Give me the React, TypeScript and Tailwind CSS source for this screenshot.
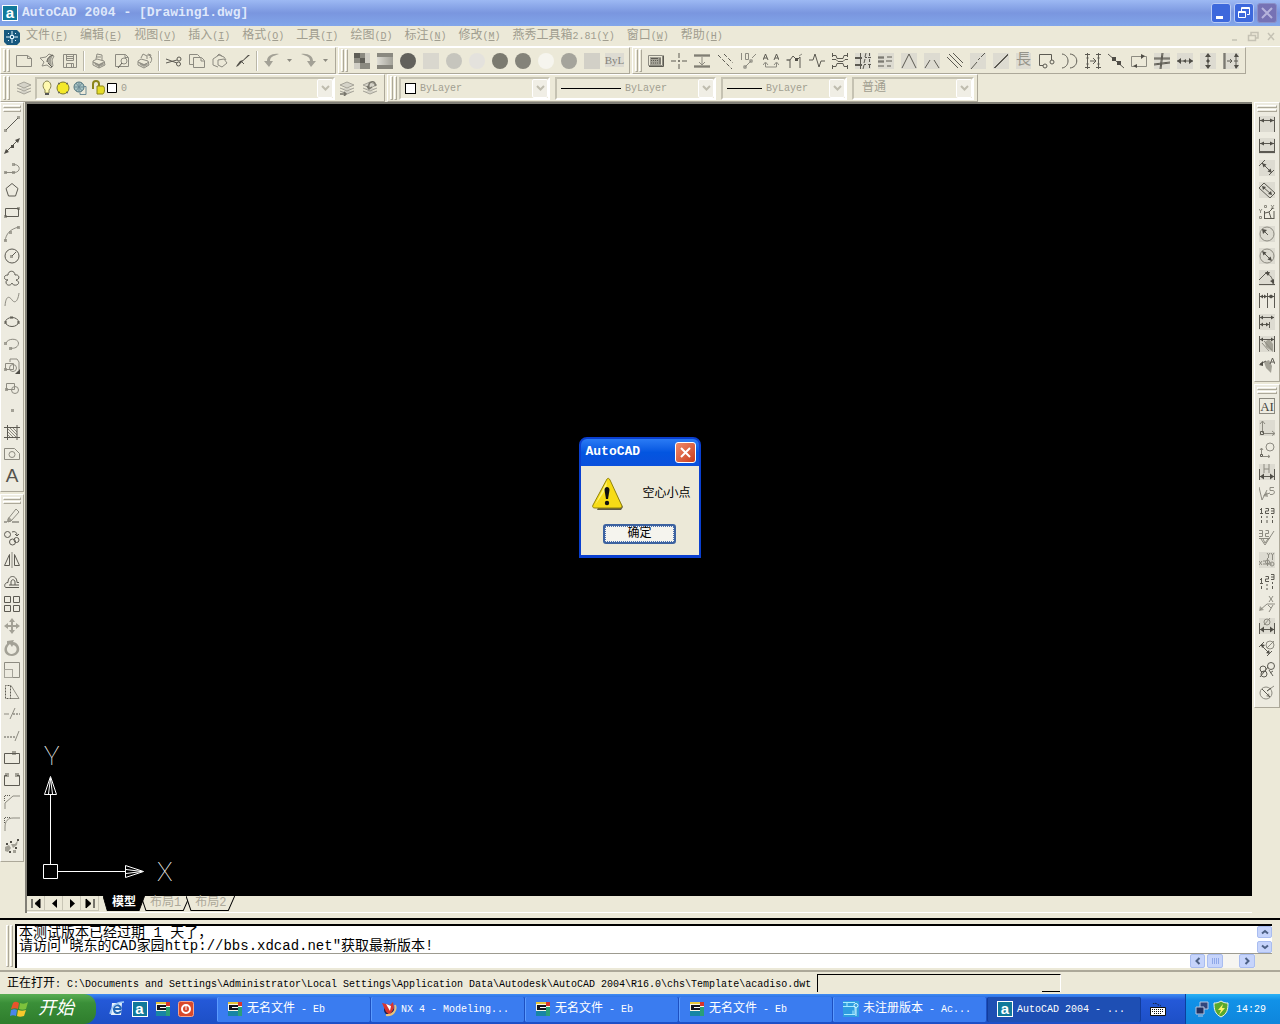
import { useState, type ReactNode } from 'react'
import clsx from 'clsx'

type Glyph = {
  name: string
  d?: string // dark strokes
  m?: string // grey strokes
  f?: string // dark fill
  g?: string // grey fill
  shade?: boolean
  dash?: string
  sep?: boolean
  more?: boolean
}

const c = (x: number, y: number, r: number) => `M${x - r} ${y}a${r} ${r} 0 1 0 ${r * 2} 0a${r} ${r} 0 1 0 ${-r * 2} 0`

const standardTools: Glyph[] = [
  { name: 'New', m: 'M.5 2.5h11l4 3v8h-15zM11.5 2.5v3h4' },
  { name: 'Open', m: 'M1 5l6-1 3-3 5 2-2 4 1 6-2 2-4-3-5 1 2-4z', d: 'M8 9c0-4 3-6 6-7M9 10l4 4', g: 'M8 9c0-4 2-6 6-7l-2 5 1 6-4-3z' },
  { name: 'Save', m: 'M1.5 1.5h13v13h-13zM4.5 1.5v6h7v-6M4.5 14.5v-4h7v4M9.500 11v3M5 3.5h6M5 5.500h6' },
  { name: 'Plot', sep: true, m: 'M5 6l1-5 5 1v5M2 8l4-2 7 2 1 4-6 3-6-3zM2 9l6 3 6-3M8 12v3M6 4h4', g: 'M3 9l5 2 4-2 1 3-5 2-4-2z' },
  { name: 'Plot Preview', m: 'M1.5 1.5h10l3 3v9h-13zM11 1.5v3h3' + c(10, 8, 3), d: 'M8 10l-4 5' },
  { name: 'Publish', m: 'M4 5l2-4 4 2v3M1 8l3-2 7 2 1 4-5 3-6-3zM1 9l6 3 5-3M10 2c5 0 6 5 3 8M11 1l3 1-1 3', g: 'M2 9l5 2 3-1 1 2-4 2-4-2z' },
  { name: 'Cut', sep: true, d: 'M0 6l11 4M0 10l11-3' + c(13, 6, 2) + c(12.5, 11, 2) },
  { name: 'Copy', m: 'M4 11.500H.5v-10h8l2 2v1M4.5 4.500h8l3 3v7h-11zM12 5v3h3' },
  { name: 'Paste', m: 'M1 6l6-4 5 2 2 3M1 6v6l5 2M5 3l2-2 3 2M6 7l6-1 3 4-5 4-4-2z' },
  { name: 'Match Properties', f: 'M15 2l-7 6-2 2-3 3-2 1 1-2 3-4 3-1 5-5z', d: 'M6 8l3 3' },
  { name: 'Undo', sep: true, g: 'M15 1C8 0 3 3 3 8H0l5 6 4-6H6c0-4 3-5 9-7z', more: true },
  { name: 'Redo', g: 'M1 1c7-1 12 2 12 7h3l-5 6-4-6h3c0-4-3-5-9-7z', more: true },
]

const yanxiuTools: Glyph[] = [
  { name: 'Calculator', m: 'M.5 2.5h14v10h-14z', d: 'M3 5.500h7M3 7.500h1m1 0h1m1 0h1m1 0h1M3 10h1m1 0h1m1 0h1m1 0h1M12 5v6M1 13.500h14.500v-11', g: 'M2 4h11v8H2z' },
  { name: 'Center mark', d: 'M8 0v5M8 7v2M8 11v5M0 8h5M7 8h2M11 8h5' },
  { name: 'Spacing', d: 'M0 2h16M0 14h16M0 3h16M0 13h16', m: 'M8 4v8M5 9l3 3 3-3' },
  { name: 'Offset dashed', d: 'M1 2l14 14M7 1l9 9', dash: '4 2' },
  { name: 'Length', m: 'M1.5 0v7M5.5.500h3v6h-3zM5 14l6-6M12 5l4-4', g: c(5, 14, 2) + c(11, 8, 2) },
  { name: 'Text replace', d: 'M0 7l2.500-6L5 7M1 5h3M11 7l2.500-6L16 7M12 5h3', m: 'M2.500 10v4h11v-4M0 12l2.500-3L5 12M11 12l2.500-3 2.500 3' },
  { name: 'Polyline', d: 'M1 7h3v8M4 7l3-4 4 4 3-3v11', m: 'M0 7h4M13 3l3-2', f: 'M9 5h3v3H9z' },
  { name: 'Break', d: 'M0 7h4l2-6 4 13 2-6h4' },
  { name: 'Break wide', d: 'M.500 0v4M0 2.500h4l1 3h6l1-3h4M15.500 0v4M0 6.500h4l2 2h5l2-2h3M0 13.500h4l1-3h6l1 3h4M.500 12v4M15.500 12v4' },
  { name: 'Trim grid', shade: true, d: 'M0 4.500h7M0 5.500h7M0 11.500h7M0 12.500h7M5.500 0v16M10 4.500h2m1 0h3M9 11.500h2m2 0h3M11 0l-1 4M10 6l-1 4M9 12l-1 4M14.500 0v3m0 3v3m0 3v3' },
  { name: 'Trim lines', shade: true, d: 'M0 4h6M9 4h5M0 8h6M8 8h6M0 13h6M9 13h4M0 5h6M0 9h6' },
  { name: 'Corner', shade: true, d: 'M1 15L8 1l7 14' },
  { name: 'Open corner', shade: true, d: 'M1 15l5-8M10 7l5 8' },
  { name: 'Parallel', d: 'M0 4l11 11M2 1l13 13M6 0l10 10' },
  { name: 'Center line', shade: true, d: 'M1 16l6-7M8 7l2-2M11 4l4-4' },
  { name: 'Line', shade: true, d: 'M1 15L15 1M2 15L15 2' },
  { name: 'Length text' },
  { name: 'Rectangle circle', d: 'M4 12.500H.5V1.500h12V7' + c(6, 13, 2) + c(13, 9, 2) },
  { name: 'Arcs', d: 'M0 1c8 1 8 13 0 14M8 1c9 1 9 13 0 14' },
  { name: 'Stretch', d: 'M2.500 0v16M13.500 0v16M0 1.500h5M0 14.500h5M11 1.500h5M11 14.500h5M5 8h5M8 5l3 3-3 3', m: 'M1 5h3M1 11h3M12 5h3M12 11h3' },
  { name: 'Break point', d: 'M0 1l16 14', f: 'M4 4h4v4H4zM9 8h4v4H9z' },
  { name: 'Rectangle', m: 'M.5 3.5h15v10h-15z', f: 'M10 1l4 2-4 3zM6 11v4l-4-2z' },
  { name: 'Join', shade: true, d: 'M0 5h16M0 6h16M0 12l16-2M0 11l16-2M8 0L6 16M9 0L7 16' },
  { name: 'Horizontal', shade: true, d: 'M0 8h7M9 8h7', f: 'M0 8l4-3v6zM16 8l-4-3v6zM6 8l3-2v4z' },
  { name: 'Vertical', shade: true, d: 'M8 1v14', f: 'M8 0l3 4H5zM8 16l3-4H5zM8 6l2 2-2 2-2-2z' },
  { name: 'Move to', shade: true, d: 'M1 0v16M2 0v16M4 8h5M7 6l2 2-2 2M13 1v14M11 8h4', f: 'M13 0l3 4h-5zM13 16l3-4h-5z' },
]

const drawTools: Glyph[] = [
  { name: 'Line', d: 'M2 14L14 2', g: 'M0 13h3v3H0zM13 0h3v3h-3z' },
  { name: 'Construction Line', d: 'M2 14L14 2', f: 'M0 16l2-5 3 3zM16 0l-2 5-3-3zM7 7h3v3H7z' },
  { name: 'Polyline', m: 'M1 12.500h9c7 0 7-8 0-8', g: 'M0 11h3v3H0zM8 11h3v3H8zM8 3h3v3H8z' },
  { name: 'Polygon', d: 'M8 1.5l6 5-2.500 7.500h-7L2 6.500z' },
  { name: 'Rectangle', d: 'M1.500 4.500h13v8h-13z', g: 'M0 11h3v3H0zM13 3h3v3h-3z' },
  { name: 'Arc', m: 'M1 15C2 8 6 3 15 1', g: 'M0 13h3v3H0zM5 5h3v3H5zM13 0h3v3h-3z' },
  { name: 'Circle', d: c(8, 8, 7) + 'M8 8l4-4', g: 'M6 7h3v3H6z' },
  { name: 'Revision Cloud', d: 'M4 5c0-5 7-5 7 0 5-1 5 5 1 5 5 2 2 6-2 5-1 0-1-1-2-2-1 3-6 3-6-1 0-1 1-2 2-2-5 0-5-5 0-5z' },
  { name: 'Spline', m: 'M1 14C2 2 6 5 8 8c3 4 6 1 7-7' },
  { name: 'Ellipse', d: 'M1.500 8a6.500 4.500 0 1 0 13 0a6.500 4.500 0 1 0-13 0', g: 'M6 2h3v3H6zM0 7h3v3H0zM13 7h3v3h-3z' },
  { name: 'Ellipse Arc', m: 'M2 7C4 2 14 2 14.500 7c0 4-4 6-8 5', g: 'M0 6h3v3H0zM5 11h3v3H5z' },
  { name: 'Insert Block', m: 'M6 4V1h7l2 3v8M1.500 5.500h8v6h-8z' + c(9, 10, 3.5), f: 'M16 11v5h-5z', g: 'M0 10h3v3H0z' },
  { name: 'Make Block', m: 'M2.500 3.500h8v6h-8z' + c(11, 10, 3.5), g: 'M1 8h3v3H1z' },
  { name: 'Point', g: 'M7 7h3v3H7z' },
  { name: 'Hatch', d: 'M3.500 1v15M13 1v15M0 3.500h16M0 13.500h16', m: 'M4 5l8 8M6 4l7 7M9 4l4 4M4 8l5 5M4 11l2 2' },
  { name: 'Region', m: 'M.500 2.500h10l5 5v6h-15z' + c(8, 8.500, 3) },
  { name: 'Multiline Text' },
]

const modifyTools: Glyph[] = [
  { name: 'Erase', d: 'M0 14h3M8 14h7', m: 'M4 11l8-10 3 3-8 9-3 1z', g: 'M5 9l3 3-2 2H3l1-4z' },
  { name: 'Copy Object', d: c(3.500, 4.500, 3) + c(8.500, 12, 3) + c(12.500, 10, 2.5) + 'M8 2c3-1 5 0 5 4M11 4l2 2 2-2' },
  { name: 'Mirror', d: 'M5.500 2.500v11h-5zM10.500 2.500v11h5z', m: 'M8 0v16' },
  { name: 'Offset', d: 'M15 13.500H2c-2 0-2-5 2-5 0-8 9-8 9 0h2M15 11H5M7 11V8c0-3 4-3 4 0v3' },
  { name: 'Array', d: 'M.5.500h6v6h-6zM9.500.500h6v6h-6zM.5 9.500h6v6h-6zM9.500 9.500h6v6h-6z' },
  { name: 'Move', g: 'M8 0l3 4H9v3h3V5l4 3-4 3V9H9v3h2l-3 4-3-4h2V9H4v2L0 8l4-3v2h3V4H5z' },
  { name: 'Rotate', g: 'M3 1l7-1-1 2c8 1 9 13-1 14C-1 16-1 7 3 4zM6 4c-6 5-2 10 2 10 6-1 6-8 1-9l-1 2z' },
  { name: 'Scale', m: 'M.5 7V.500h15v15H9', d: 'M.5 7.500h8v8h-8z', dash: '1 1' },
  { name: 'Stretch', m: 'M7 1.500l8 13H6', d: 'M1.500 14.500v-13h5v13z', dash: '2 1' },
  { name: 'Trim', m: 'M0 8h5M6 13l5-11', d: 'M9 8h7', dash: '2 1' },
  { name: 'Extend', m: 'M11 13l4-10', d: 'M0 9h11', dash: '2 1' },
  { name: 'Break at Point', d: 'M.5 3.500h15v10h-15z', g: 'M8 1h4v4H8z' },
  { name: 'Break', d: 'M3 3.500H.5v10h15v-10H13', g: 'M1 1h4v4H1zM11 1h4v4h-4z' },
  { name: 'Chamfer', m: 'M1 15V9l8-7h7', d: 'M.5 7V1.500H7', dash: '1 1' },
  { name: 'Fillet', m: 'M1 15V11C1 5 4 2 9 2h7', d: 'M.5 7V1.500H7', dash: '1 1' },
  { name: 'Explode', g: 'M1 9l4-2 2 3-3 4-3-1zM7 6h4l3-4-1 5-4 3zM9 12h3v3H9z', f: 'M2 5h2v2H2zM6 3h2v2H6zM11 9h2v2h-2zM5 13h2v2H5zM13 1h2v2h-2z' },
]

const dimensionTools: Glyph[] = [
  { name: 'Linear', shade: true, d: 'M.5 1v15M15.500 1v15M1 4.500h14', f: 'M1 4.500l4-2v4zM15 4.500l-4-2v4z' },
  { name: 'Baseline', shade: true, d: 'M.5 1v14M15.500 1v14M0 14.500h16M1 5.500h14M0 13.500h16', f: 'M1 5.500l4-2v4zM15 5.500l-4-2v4z' },
  { name: 'Aligned', shade: true, d: 'M0 6l6-6M10 15l5-5M3 3l10 10', f: 'M3 3l4.500 1.500-3 3zM13 13l-4.500-1.500 3-3z' },
  { name: 'Rotated', shade: true, d: 'M0 6l5-5M11 16l5-5M0 6l11 10M5 1l11 10M4 5l8 7', f: 'M3 4l4 1-3 3zM13 13l-4-1 3-3z' },
  { name: 'Ordinate', d: 'M5.500 15V7M5 14.500h10M6 9l4-1 4-4M15 7v8M10 8l2 6', m: 'M0 5l1.500 2L3 5M1.500 7v2M.5 12.500h2v2h-2zM5.500 1.500h2v2h-2zM12 1l3 4M15 1l-3 4' },
  { name: 'Radius', shade: true, m: c(8, 8, 7), d: 'M4 4l5 5', f: 'M3 3l5 1-4 4z' },
  { name: 'Diameter', shade: true, m: c(8, 8, 7), d: 'M4 4l8 8', f: 'M3 3l4.500 1.500-3 3zM13 13l-4.500-1.500 3-3z' },
  { name: 'Angular', shade: true, d: 'M0 14.500h16M0 10l9-9M7 3c5 2 7 6 7 11', f: 'M6 2l5 0-2 4zM15 14l-4-3 4-2z' },
  { name: 'Continue', d: 'M.5 1v15M8.500 1v15M15.500 1v15M1 4.500h14', f: 'M1 4.500l3-2v4zM8 4.500l-3-2v4zM9 4.500l3-2v4zM15 4.500l-3-2v4z' },
  { name: 'Stacked', shade: true, d: 'M.5 1v14M1 3.500h14M1 10.500h9M10.500 8v6', f: 'M1 3.500l3-2v4zM15 3.500l-3-2v4zM1 10.500l3-2v4zM10 10.500l-3-2v4z' },
  { name: 'Quick', shade: true, d: 'M.5 0v16M15.500 0v16M1 3.500h14', m: 'M3 7l7 8M5 5l8 9', f: 'M1 3.500l3-2v4zM15 3.500l-3-2v4z', g: 'M6 6l4-3 4 5v8l-7-5z' },
  { name: 'Leader', d: 'M1 6l6-3M11 6l2.500-6L16 6M12 4h3', f: 'M0 7l4-4v5z', g: 'M5 4l5-2 3 6-1 7-5-5z' },
]

const annotationTools: Glyph[] = [
  { name: 'Text Height' },
  { name: 'UCS', shade: true, m: 'M3.500 13V1M5 13.500h11M1 4l2.500-3L6 4M13 11l3 2.500-3 2', d: 'M1.500 11.500h3v3h-3z' },
  { name: 'UCS Object', m: c(11, 5, 4) + 'M2.500 13V6M4 14.500h7M1 8l1.500-2L4 8M9 13l2 1.500L9 16', d: 'M1.500 12.500h2v2h-2z' },
  { name: 'H Dimension', shade: true, m: 'M5 0v9M10 0v9M5 5h5', d: 'M.5 5v11M15.500 5v11M1 12.500h14', f: 'M1 12.500l4-3v6zM15 12.500l-4-3v6z' },
  { name: 'Slope', m: 'M0 1l3 13L8 4M5 9l6-2M15 1.500h-4v3h3c2 0 2 4-1 4h-2', g: 'M4 10l4-4 1 5z' },
  { name: 'Column numbers', d: 'M2.500 0v6M1 1.500h1M1 5.500h3M6.500.500h3v2.500h-3v2.500h3.500M12 .500h3v5h-3M12 3h3M2.500 8v2M2.500 12v3M8 8v2M8 12v3M13.500 8v2M13.500 12v3' },
  { name: 'Roughness', m: 'M0 .500h3.500v6H0M0 3.500h3M6.500.500h3v3h-3v3h3.500M0 8.500h11M2 9l4 6L15 1M4 9l2 4 3-4' },
  { name: 'Coordinates', shade: true, m: 'M0 9l3 4M3 9l-3 4M8 1l1.500 2L11 1M9.500 3v3M12 1l1.500 2L15 1M13.500 3v5M4 12h9M4 9h3M8.500 6v8' + c(13, 12, 2) + c(8.500, 10, 2) },
  { name: 'Row numbers', d: 'M2.500 4v6M1 5.500h1M1 9.500h3M6.500 2.500h3V5h-3v2.500h3.500M12 .500h3v5h-3M12 3h3M2.500 12v3M8 10v2M8 14v2M13.500 8v2M13.500 12v3' },
  { name: 'XY Leader', m: 'M1 14l7-6h8M10 0l4 6M14 0l-4 6M9 9l3 3M14 9l-4 7', g: 'M0 15l1-5 4 4z' },
  { name: 'Hole', shade: true, m: c(8, 4, 3) + 'M5 7l6-7', d: 'M.5 5v11M15.500 5v11M1 11.500h14', f: 'M1 11.500l4-3v6zM15 11.500l-4-3v6z' },
  { name: 'Aligned hole', m: c(11, 5, 4) + 'M8 8l7-7', d: 'M0 7l5-5M8 16l5-5M2 5l8 8', f: 'M2 4l4 1-3 3zM11 14l-4-1 3-3z' },
  { name: 'Balloons', d: c(4, 7, 3) + c(12, 4, 3.5) + c(5, 12, 3) + 'M1 15L9 5M10 8l4 6M14 9l-3 2' },
  { name: 'Diameter mark', m: c(7, 9, 6) + 'M8 7l7-5', d: 'M3 5l8 8M8 7l4-3', g: 'M11 14l-4-2 3-3z' },
]

const swatches = [
  { name: 'Red', tone: 'rounded-full bg-[#62615c]' },
  { name: 'Yellow', tone: 'bg-[#d9d7ce]' },
  { name: 'Green', tone: 'rounded-full bg-[#c6c5bd]' },
  { name: 'Cyan', tone: 'rounded-full bg-[#e4e2dd]' },
  { name: 'Blue', tone: 'rounded-full bg-[#7b7a70]' },
  { name: 'Magenta', tone: 'rounded-full bg-[#84837a]' },
  { name: 'White', tone: 'rounded-full bg-[#f6f5ee]' },
  { name: 'Gray', tone: 'rounded-full bg-[#a5a49c]' },
  { name: 'Light gray', tone: 'bg-[#d2d0c7]' },
]

const menus = [
  ['文件', 'F'], ['编辑', 'E'], ['视图', 'V'], ['插入', 'I'], ['格式', 'O'], ['工具', 'T'],
  ['绘图', 'D'], ['标注', 'N'], ['修改', 'M'], ['燕秀工具箱2.81', 'Y'], ['窗口', 'W'], ['帮助', 'H'],
]

const tasks = [
  { icon: 'eb', label: '无名文件 - Eb' },
  { icon: 'nx', label: 'NX 4 - Modeling...' },
  { icon: 'eb', label: '无名文件 - Eb' },
  { icon: 'eb', label: '无名文件 - Eb' },
  { icon: 'ac', label: '未注册版本 - Ac...' },
  { icon: 'cad', label: 'AutoCAD 2004 - ...', active: true },
]

// Latin runs are set smaller than the Chinese ones so both keep the half/full width rhythm
function Mixed({ text, latin = 'text-[10px]' }: { text: string; latin?: string }) {
  return (
    <>
      {text.split(/([\x20-\x7e]+)/).map((run, i) =>
        i % 2 ? <span key={i} className={latin}>{run}</span> : run
      )}
    </>
  )
}

function GlyphIcon({ glyph }: { glyph: Glyph }) {
  if (glyph.name === 'Length text') return <span className="h-4 bg-[#dddbd2] text-[15px] leading-4 text-[#96948a]">長</span>
  if (glyph.name === 'Multiline Text') return <span className="font-['Liberation_Sans'] text-[19px] leading-4 text-[#55534c]">A</span>
  if (glyph.name === 'Text Height') {
    return (
      <span className="flex h-4 w-4 items-center justify-center border border-[#8a887e] font-['Liberation_Serif'] text-[13px] leading-none text-[#45433d]">AI</span>
    )
  }
  return (
    <svg width="16" height="16" viewBox="0 0 16 16" fill="none" aria-hidden="true">
      {glyph.shade && <rect width="16" height="16" fill="#dddbd1" />}
      {glyph.g && <path d={glyph.g} fill="#a3a196" />}
      {glyph.m && <path d={glyph.m} stroke="#8d8b81" />}
      {glyph.d && <path d={glyph.d} stroke="#5c5a52" strokeDasharray={glyph.dash} />}
      {glyph.f && <path d={glyph.f} fill="#4f4d46" />}
    </svg>
  )
}

function Grip({ horizontal = false }: { horizontal?: boolean }) {
  const line = 'border border-t-white border-l-white border-r-[#aca899] border-b-[#aca899]'
  return horizontal ? (
    <div className="mx-[2px] flex flex-col gap-px pt-[2px] pb-px">
      <i className={clsx('h-[3px]', line)} />
      <i className={clsx('h-[3px]', line)} />
    </div>
  ) : (
    <div className="my-px flex gap-px self-stretch px-[2px]">
      <i className={clsx('w-[3px]', line)} />
      <i className={clsx('w-[3px]', line)} />
    </div>
  )
}

function Toolbar({ children }: { children: ReactNode }) {
  return (
    <div className="flex h-full items-center border border-t-white border-l-white border-r-[#aca899] border-b-[#aca899] pr-[3px]">
      <Grip />
      {children}
    </div>
  )
}

function ToolButton({ label, children }: { label: string; children: ReactNode }) {
  return (
    <button type="button" aria-label={label} className="flex h-[22px] w-[23px] shrink-0 items-center justify-center">
      {children}
    </button>
  )
}

function Tools({ items }: { items: Glyph[] }) {
  return (
    <>
      {items.map(glyph => (
        <div key={glyph.name} className="flex items-center">
          {glyph.sep && <i className="mx-[2px] h-5 w-[2px] border-l border-l-[#bab7a8] bg-white" />}
          <ToolButton label={glyph.name}><GlyphIcon glyph={glyph} /></ToolButton>
          {glyph.more && (
            <button type="button" aria-label={`${glyph.name} list`} className="flex w-[13px] justify-center">
              <svg width="5" height="3" viewBox="0 0 5 3" aria-hidden="true"><path d="M0 0h5L2.500 3z" fill="#8d8b81" /></svg>
            </button>
          )}
        </div>
      ))}
    </>
  )
}

function SideToolbar({ items }: { items: Glyph[] }) {
  return (
    <div className="flex flex-col border border-t-white border-l-white border-r-[#aca899] border-b-[#aca899] bg-[#edebe0] pb-1">
      <Grip horizontal />
      {items.map(glyph => (
        <button key={glyph.name} type="button" aria-label={glyph.name} className="flex h-[22px] items-center justify-center">
          <GlyphIcon glyph={glyph} />
        </button>
      ))}
    </div>
  )
}

function Combo({ label, value, width, children, zh }: { label: string; value: string; width: string; children?: ReactNode; zh?: boolean }) {
  return (
    <div className={clsx('flex h-[23px] items-center border-2 border-t-[#c5c2b2] border-l-[#c5c2b2] border-r-white border-b-white pl-1', width)}>
      {children}
      <select
        aria-label={label}
        className={clsx('h-full min-w-0 flex-1 appearance-none bg-transparent pl-1 text-[#a19e90] outline-none', zh ? 'text-[12px]' : 'text-[10px]')}
      >
        <option>{value}</option>
      </select>
      <span className="pointer-events-none flex h-full w-4 items-center justify-center rounded-xs border border-white bg-[#f0eee5]">
        <svg width="9" height="6" viewBox="0 0 9 6" fill="none" aria-hidden="true"><path d="M1 1l3.500 3.500L8 1" stroke="#bfbcae" strokeWidth="2" /></svg>
      </span>
    </div>
  )
}

function CadLogo() {
  return (
    <span className="flex h-4 w-4 shrink-0 items-center justify-center border border-white bg-[#11799a] font-['Liberation_Sans'] font-bold text-white">
      <span className="text-[15px] leading-3">a</span>
    </span>
  )
}

function LayersIcon({ mark }: { mark?: string }) {
  return (
    <svg width="16" height="16" viewBox="0 0 16 16" fill="none" stroke="#a5a398" aria-hidden="true">
      <path d="M1 5l7-3 7 3-7 3zM1 8l7 3 7-3M1 11l7 3 7-3" fill="#d5d3c8" />
      {mark && <path d={mark} stroke="#77756b" strokeWidth="1.500" />}
    </svg>
  )
}

function TaskIcon({ kind }: { kind: string }) {
  if (kind === 'cad') return <CadLogo />
  if (kind === 'nx') {
    return (
      <svg width="16" height="16" viewBox="0 0 16 16" fill="none" aria-hidden="true">
        <circle cx="8" cy="9" r="5" fill="#1c2350" />
        <path d="M1 2l8 2 3-3 1 6-4 7-4-3z" fill="#d9342f" />
        <path d="M5 3l5 2-1 5z" fill="#fff" />
        <path d="M14 4c2 5-2 11-9 10" stroke="#e8c27a" strokeWidth="2" />
      </svg>
    )
  }
  if (kind === 'ac') {
    return (
      <svg width="16" height="16" viewBox="0 0 16 16" fill="none" aria-hidden="true">
        <path d="M0 0h16v16H0z" fill="#2f9de0" />
        <path d="M0 5.500h12v8H1M4 1v4M0 1.500h12M10 9.500v4" stroke="#a9ecff" />
        <circle cx="13" cy="4.500" r="2" stroke="#d8f8ff" />
        <path d="M13 7v8" stroke="#d8f8ff" />
      </svg>
    )
  }
  return (
    <svg width="16" height="16" viewBox="0 0 16 16" aria-hidden="true">
      <path d="M1 1h14v14H1z" fill="#f7f4e6" />
      <path d="M1 1h10v2H1z" fill="#e8c63a" />
      <path d="M11 1h4v4h-4z" fill="#d8342c" />
      <path d="M2 4h9v5H2z" fill="#15151c" />
      <path d="M5 6h7v1H5z" fill="#fff" />
      <path d="M1 10h10v5H1z" fill="#1785a5" />
      <path d="M11 6h4v9h-4z" fill="#2a9f78" />
    </svg>
  )
}

function AlertDialog({ onClose }: { onClose: () => void }) {
  return (
    <div role="alertdialog" aria-labelledby="alert-title" className="w-[122px] rounded-t-lg border-2 border-[#0a3fd0] bg-[#0a3fd0] pb-px">
      <div className="flex h-[27px] items-center justify-between rounded-t-md bg-linear-to-b from-[#2a7bf5] via-[#0355e0] to-[#0a50dc] pr-[3px] pl-[5px]">
        <h2 id="alert-title" className="text-[13px] font-bold text-white">AutoCAD</h2>
        <button type="button" aria-label="Close" onClick={onClose} className="flex h-[21px] w-[21px] items-center justify-center rounded-[3px] border border-white bg-linear-to-br from-[#ef8a6c] to-[#c93a15]">
          <svg width="11" height="11" viewBox="0 0 11 11" fill="none" stroke="#fff" strokeWidth="2" aria-hidden="true"><path d="M1 1l9 9M10 1l-9 9" /></svg>
        </button>
      </div>
      <div className="flex flex-col items-center bg-[#ece9d8] pt-[10px] pb-[11px]">
        <div className="flex w-full items-center justify-between pr-2 pl-[10px]">
          <svg width="34" height="36" viewBox="0 0 34 36" aria-hidden="true">
            <path d="M18 5l14 26-2 3H6z" fill="#5e5a45" />
            <path d="M16 3c1-1 2-1 3 1l12 26c0 1-1 2-2 2H4c-2 0-3-1-2-3z" fill="#f7dc16" stroke="#91830d" />
            <path d="M16 5l-1 8-11 16z" fill="#fff37a" />
            <path d="M13.500 14c0-4 5-4 5 0l-1.500 9h-2z" fill="#111" />
            <circle cx="16" cy="27" r="2.200" fill="#111" />
          </svg>
          <p className="text-[12px] leading-4 text-black">空心小点</p>
        </div>
        <button type="button" onClick={onClose} className="mt-3 h-[20px] w-[73px] rounded-[3px] border-2 border-[#3c62a0] bg-[#f5f4ee]">
          <span className="flex h-full items-center justify-center border border-dotted border-[#4a6fb0] text-[12px] leading-none text-black">确定</span>
        </button>
      </div>
    </div>
  )
}

function UcsIcon() {
  return (
    <svg className="absolute bottom-0 left-4" width="136" height="156" viewBox="0 -12 136 156" fill="none" stroke="#fff" aria-hidden="true">
      <path d="M.5 112.500h14v14H.5zM7.500 112V43M15 119.500h68" />
      <path d="M7.500 24.500l6 18h-12zM7.500 26l-2 16M7.500 26l2 16M82.500 113.500v12l18-6zM83 117.500l16 2-16 2" />
      <g fill="#fff" stroke="none" className="font-['Roboto'] text-[26px] font-thin">
        <text x="1" y="13">Y</text>
        <text x="114" y="129">X</text>
      </g>
    </svg>
  )
}

function SheetTab({ label, active }: { label: string; active?: boolean }) {
  return (
    <button type="button" className={clsx('relative -ml-[4px] h-[15px] px-[9px] text-[12px] leading-[15px]', active ? 'z-10 font-bold text-white' : 'text-[#aca899]')}>
      <svg className="absolute inset-0 h-full w-full" viewBox="0 0 50 14" preserveAspectRatio="none" fill={active ? '#000' : '#ece9d8'} stroke="#000" aria-hidden="true">
        <path d="M0 0l5 13.500h38L49.500 0" />
      </svg>
      <span className="relative"><Mixed text={label} latin="text-[12px]" /></span>
    </button>
  )
}

function ScrollButton({ label, d, size }: { label: string; d: string; size: string }) {
  return (
    <button type="button" aria-label={label} className={clsx('flex items-center justify-center rounded-[2px] border border-[#a9bdf0] bg-[#c6d4fb]', size)}>
      <svg width="8" height="8" viewBox="0 0 8 8" fill="none" stroke="#4d6185" strokeWidth="2" aria-hidden="true"><path d={d} /></svg>
    </button>
  )
}

export default function App() {
  const [alertOpen, setAlertOpen] = useState(true)
  const [command, setCommand] = useState('')

  return (
    <div className="flex h-screen flex-col overflow-hidden bg-[#ece9d8] font-['Liberation_Mono','Noto_Sans_CJK_SC',monospace] text-[12px]">
      {/* Title bar */}
      <header className="flex h-[26px] shrink-0 items-center bg-linear-to-b from-[#9db9f3] via-[#7a96df] to-[#82a6ea] pr-[3px] pl-[2px]">
        <CadLogo />
        <h1 className="ml-1 flex-1 text-[13px] font-bold text-[#dfe8fb]">AutoCAD 2004 - [Drawing1.dwg]</h1>
        <div className="flex gap-[3px] text-white">
          <button type="button" aria-label="Minimize" className="h-5 w-5 rounded-[3px] border border-[#b9cbf5] bg-[#3d68dc]">
            <svg width="18" height="18" viewBox="0 0 18 18" aria-hidden="true"><path d="M4 12h7v3H4z" fill="#fff" /></svg>
          </button>
          <button type="button" aria-label="Restore" className="h-5 w-5 rounded-[3px] border border-[#b9cbf5] bg-[#3d68dc]">
            <svg width="18" height="18" viewBox="0 0 18 18" fill="none" stroke="#fff" aria-hidden="true"><path d="M6.500 7V3.500h8v7H12M6 4.500h9M3.500 7.500h7v6h-7zM3 8.500h8" /></svg>
          </button>
          <button type="button" aria-label="Close" className="h-5 w-5 rounded-[3px] border border-[#8a90c8] bg-[#7672b4]">
            <svg width="18" height="18" viewBox="0 0 18 18" fill="none" stroke="#b5b3dc" strokeWidth="2" aria-hidden="true"><path d="M4 4l10 10M14 4L4 14" /></svg>
          </button>
        </div>
      </header>

      {/* Menu */}
      <nav className="flex h-[20px] shrink-0 items-center pt-px pl-1 text-[#a09d8f]">
        <svg className="h-4 w-4" viewBox="0 0 16 16" fill="none" aria-hidden="true">
          <path d="M0 1h13l3 3v9l-3 3H3L0 13z" fill="#17587f" />
          <path d="M8 2v4M8 10v4M2 8h4M10 8h4M6.500 6.500h3v3h-3zM4 4l1 1M12 4l-1 1M4 12l1-1M12 12l-1-1" stroke="#e3f5ff" />
        </svg>
        {menus.map(([label, key]) => (
          <button key={key} type="button" className="px-[6px] leading-[19px] whitespace-nowrap">
            <Mixed text={label} />
            <span className="text-[10px]">(<u>{key}</u>)</span>
          </button>
        ))}
        <div className="ml-auto flex gap-[2px] pr-px">
          {['M5 11h5', 'M6 6V3.500h7V9h-2M3.500 6.500h7v5h-7z', 'M5 4l6 7M11 4l-6 7'].map((d, i) => (
            <button key={d} type="button" aria-label={['Minimize drawing', 'Restore drawing', 'Close drawing'][i]}>
              <svg width="16" height="16" viewBox="0 0 16 16" fill="none" stroke="#c5c2b4" strokeWidth="1.500" aria-hidden="true"><path d={d} /></svg>
            </button>
          ))}
        </div>
      </nav>

      {/* Toolbars */}
      <div className="flex h-[28px] shrink-0 gap-[2px] border-t border-white">
        <Toolbar><Tools items={standardTools} /></Toolbar>
        <Toolbar>
          <ToolButton label="Color grid">
            <svg width="16" height="16" viewBox="0 0 16 16" aria-hidden="true">
              <path d="M0 0h16v16H0z" fill="#8b8a81" />
              <path d="M0 0h6v5H0zM6 5h5v5H6z" fill="#5e5d56" />
              <path d="M11 0h5v10h-5zM0 10h6v6H0z" fill="#d0cec5" />
            </svg>
          </ToolButton>
          <ToolButton label="Color gradient"><i className="h-4 w-4 border-y-4 border-t-[#8a8980] border-b-[#85847b] bg-linear-to-r from-[#dddcd4] to-[#a2a198]" /></ToolButton>
          {swatches.map(s => (
            <ToolButton key={s.name} label={s.name}><i className={clsx('h-4 w-4', s.tone)} /></ToolButton>
          ))}
          <button type="button" className="h-[22px] w-[23px] text-[#85837a]"><span className="bg-[#dddbd2] py-px font-['Liberation_Serif'] text-[11px]">ByL</span></button>
        </Toolbar>
        <Toolbar><Tools items={yanxiuTools} /></Toolbar>
      </div>
      <div className="flex h-[28px] shrink-0 gap-[2px]">
        <Toolbar>
          <ToolButton label="Layer Manager"><LayersIcon /></ToolButton>
          <Combo label="Layer" value="0" width="w-[300px]">
            <svg width="76" height="16" viewBox="0 0 76 16" fill="none" aria-hidden="true">
              <path d="M4 10C0 6 3 1 6 1s6 5 2 9v3H4z" fill="#fff9b0" stroke="#8a8650" />
              <path d="M4 14h4" stroke="#555" strokeWidth="2" />
              <circle cx="22" cy="8" r="6" fill="#f4e92a" stroke="#7c7a2c" />
              <path d="M17 3l2 1M27 3l-2 1M17 13l2-1M27 13l-2-1" stroke="#555" />
              <circle cx="38" cy="7" r="5" fill="#a9c4c4" stroke="#51747c" />
              <path d="M38 2v10M33 7h10M35 3l6 8M41 3l-6 8M39 12.500v2h6v-8h-2" stroke="#6d8b95" />
              <path d="M52 9V4c0-4 6-4 6 0v2" stroke="#8a8418" strokeWidth="2" />
              <path d="M56 6h6c2 0 2 7 0 8h-6z" fill="#e5dc27" stroke="#8a8418" />
              <path d="M66.500 3.500h9v9h-9z" fill="#fff" stroke="#000" />
            </svg>
          </Combo>
          <ToolButton label="Make Layer Current"><LayersIcon mark="M1 14h6M5 12l2 2-2 2" /></ToolButton>
          <ToolButton label="Layer Previous"><LayersIcon mark="M7 8c-2-8 8-8 6-2M5 6l2 3 3-2" /></ToolButton>
        </Toolbar>
        <Toolbar>
          <div className="flex gap-[5px]">
            <Combo label="Color" value="ByLayer" width="w-[151px]">
              <i className="h-[11px] w-[11px] border border-black bg-white" />
            </Combo>
            <Combo label="Linetype" value="ByLayer" width="w-[161px]"><i className="h-px w-[60px] bg-black" /></Combo>
            <Combo label="Lineweight" value="ByLayer" width="w-[126px]"><i className="h-px w-[35px] bg-black" /></Combo>
            <Combo label="Plot style" value="普通" width="w-[122px]" zh />
          </div>
        </Toolbar>
      </div>

      {/* Drawing area */}
      <main className="flex min-h-0 flex-1">
        <aside className="mr-px flex w-[24px] shrink-0 flex-col gap-[2px]">
          <SideToolbar items={drawTools} />
          <SideToolbar items={modifyTools} />
        </aside>
        <div className="flex min-w-0 flex-1 flex-col border-t-2 border-l-2 border-[#817f76]">
          <section className="relative grid min-h-0 flex-1 place-items-center bg-black pb-[6px]">
            <UcsIcon />
            {alertOpen && <AlertDialog onClose={() => setAlertOpen(false)} />}
          </section>
          <div className="flex h-[17px] shrink-0 items-start border-b border-white">
            {['M4 3v9M12 3v9l-5-4.500z', 'M11 3v9L6 7.500z', 'M6 3v9l5-4.500z', 'M12 3v9M4 3v9l5-4.500z'].map((d, i) => (
              <button key={d} type="button" aria-label={['First', 'Previous', 'Next', 'Last'][i]} className="flex h-[15px] w-[18px] items-center justify-center border-r border-b border-[#c9c6b6]">
                <svg width="16" height="15" viewBox="0 0 16 15" fill="#000" aria-hidden="true"><path d={d} stroke={i % 3 ? 'none' : '#000'} /></svg>
              </button>
            ))}
            <div className="ml-2 flex">
              <SheetTab label="模型" active />
              <SheetTab label="布局1" />
              <SheetTab label="布局2" />
            </div>
          </div>
        </div>
        <aside className="ml-[2px] flex w-[26px] shrink-0 flex-col gap-[2px]">
          <SideToolbar items={dimensionTools} />
          <SideToolbar items={annotationTools} />
        </aside>
      </main>

      {/* Command window */}
      <section className="mt-[5px] flex h-[54px] shrink-0 border-t-2 border-b-2 border-t-black border-b-[#aca899] pt-1 pr-2 pb-[2px] pl-1">
        <Grip />
        <div className="flex flex-1 flex-col border-t-2 border-l-2 border-black">
          <div className="flex h-[28px] shrink-0 justify-between border-b border-[#9d9b90] bg-white">
            <div className="pt-px pl-[2px] text-[14px] leading-[13px] whitespace-pre text-black">
              <p><Mixed text="本测试版本已经过期 1 天了，" latin="text-[14px]" /></p>
              <p><Mixed text={'请访问"晓东的CAD家园http://bbs.xdcad.net"获取最新版本!'} latin="text-[14px]" /></p>
            </div>
            <div className="flex flex-col justify-between">
              <ScrollButton label="Scroll up" d="M1 5.500L4 3l3 2.500" size="h-[12px] w-[15px]" />
              <ScrollButton label="Scroll down" d="M1 2.500L4 5l3-2.500" size="h-[12px] w-[15px]" />
            </div>
          </div>
          <div className="flex min-h-0 flex-1 bg-white">
            <input
              aria-label="Command"
              value={command}
              onChange={e => setCommand(e.target.value)}
              className="min-w-0 flex-1 px-1 outline-none"
            />
            <div className="flex items-center bg-[#f6f5f1]">
              <ScrollButton label="Scroll left" d="M5.500 1l-3 3 3 3" size="h-[14px] w-[15px]" />
              <i className="ml-[2px] flex h-[14px] w-[16px] items-center justify-center gap-px rounded-[2px] border border-[#a9bdf0] bg-[#c6d4fb]">
                <b className="h-[6px] w-px bg-[#8fa8e8]" />
                <b className="h-[6px] w-px bg-[#8fa8e8]" />
                <b className="h-[6px] w-px bg-[#8fa8e8]" />
                <b className="h-[6px] w-px bg-[#8fa8e8]" />
              </i>
              <i className="w-4" />
              <ScrollButton label="Scroll right" d="M2.500 1l3 3-3 3" size="h-[14px] w-[16px]" />
            </div>
            <div className="w-[17px] bg-[#ece9d8]" />
          </div>
        </div>
      </section>

      {/* Status bar */}
      <footer className="flex h-[22px] shrink-0 items-center pl-[7px] text-black">
        <p className="pt-[2px] whitespace-pre">
          <Mixed text={'正在打开: C:\\Documents and Settings\\Administrator\\Local Settings\\Application Data\\Autodesk\\AutoCAD 2004\\R16.0\\chs\\Template\\acadiso.dwt'} />
        </p>
        <div className="ml-[6px] flex h-[18px] w-[244px] items-end justify-end border-t border-r border-l border-t-black border-r-white border-l-black">
          <i className="h-px w-[18px] bg-black" />
        </div>
      </footer>

      {/* Taskbar */}
      <div className="flex h-[30px] shrink-0 bg-linear-to-b from-[#3f8cf3] via-[#2459d8] via-20% to-[#1d4fc6] text-white">
        <button type="button" className="flex w-[96px] items-center rounded-r-xl bg-linear-to-b from-[#5aae54] via-[#3a8f38] via-30% to-[#2f7d2d] pl-[10px]">
          <svg width="20" height="18" viewBox="0 0 20 18" aria-hidden="true">
            <path d="M3 3c2-2 4-1 6 0L8 9C6 8 4 8 1 9z" fill="#e8542c" />
            <path d="M10 3c3 1 5 1 8-1l-2 7c-2 1-5 1-7 0z" fill="#7dc23c" />
            <path d="M1 10c3-1 4-1 6 0l-1 6c-2-1-4-1-6 0z" fill="#4a86ea" />
            <path d="M8 10c3 1 5 1 8 0l-2 6c-3 1-5 1-7 0z" fill="#f7c92c" />
          </svg>
          <span className="ml-2 text-[18px] leading-none italic">开始</span>
        </button>
        <div className="ml-[9px] flex items-center">
          <ToolButton label="Internet Explorer">
            <svg width="16" height="16" viewBox="0 0 16 16" fill="none" aria-hidden="true">
              <path d="M3 2h10l-1 12H2z" fill="#e8f2fc" />
              <path d="M12 8H5c0-5 6-5 7 0M5 8c0 5 5 5 7 2" stroke="#2467b5" strokeWidth="2" />
              <path d="M1 13C3 4 9 1 15 1" stroke="#9cc8f5" strokeWidth="1.500" />
            </svg>
          </ToolButton>
          <ToolButton label="AutoCAD"><CadLogo /></ToolButton>
          <ToolButton label="Eb"><TaskIcon kind="eb" /></ToolButton>
          <ToolButton label="Office">
            <svg width="16" height="16" viewBox="0 0 16 16" fill="none" aria-hidden="true">
              <rect x=".5" y=".5" width="15" height="15" rx="2" fill="#d9492b" stroke="#f4a48c" />
              <circle cx="8" cy="8" r="4" stroke="#fff" strokeWidth="2" />
              <path d="M8 5v4" stroke="#fff" />
            </svg>
          </ToolButton>
        </div>
        <div className="ml-5 flex min-w-0 flex-1 items-center">
          {tasks.map((task, i) => (
            <button
              key={i}
              type="button"
              className={clsx(
                'flex h-[25px] w-[154px] items-center gap-1 rounded-[2px] border-r border-l pl-[9px] whitespace-nowrap',
                task.active ? 'border-[#123c9c] bg-[#1e4fb4]' : 'border-r-[#1d4fc0] border-l-[#5b9bff] bg-[#3a7cf0]'
              )}
            >
              <TaskIcon kind={task.icon} />
              <span><Mixed text={task.label} /></span>
            </button>
          ))}
          <button type="button" aria-label="Input language" className="ml-[9px]">
            <svg width="16" height="16" viewBox="0 0 16 16" fill="none" aria-hidden="true">
              <path d="M3 2c1 2 3-1 4 1s4 0 4 3" stroke="#111" strokeDasharray="1 1" />
              <path d="M.5 6.500h15v8H.5z" fill="#fff" stroke="#111" />
              <path d="M2 8.500h12M2 10.500h12M4 12.500h8" stroke="#111" strokeDasharray="1 1" />
            </svg>
          </button>
        </div>
        <div className="flex w-[95px] items-center border-l border-[#0b3f9e] bg-linear-to-b from-[#2bb2f5] via-[#1192e8] via-20% to-[#0f86dc] pl-[9px]">
          <svg width="34" height="18" viewBox="0 0 34 18" fill="none" aria-hidden="true">
            <path d="M5 2h8v7H5z" fill="#31477c" stroke="#b9c6df" />
            <path d="M1 7h8v7H1zM3 16h5" fill="#22315f" stroke="#b9c6df" />
            <path d="M26 1c3 2 5 2 7 2 0 7-1 11-7 14-6-3-7-7-7-14 2 0 4 0 7-2z" fill="#5aa92c" stroke="#f0f5e6" />
            <path d="M28 4l-5 6h3l-2 5 6-7h-3z" fill="#fdf36a" />
          </svg>
          <span className="ml-[7px] text-[10px]">14:29</span>
        </div>
      </div>
    </div>
  )
}
